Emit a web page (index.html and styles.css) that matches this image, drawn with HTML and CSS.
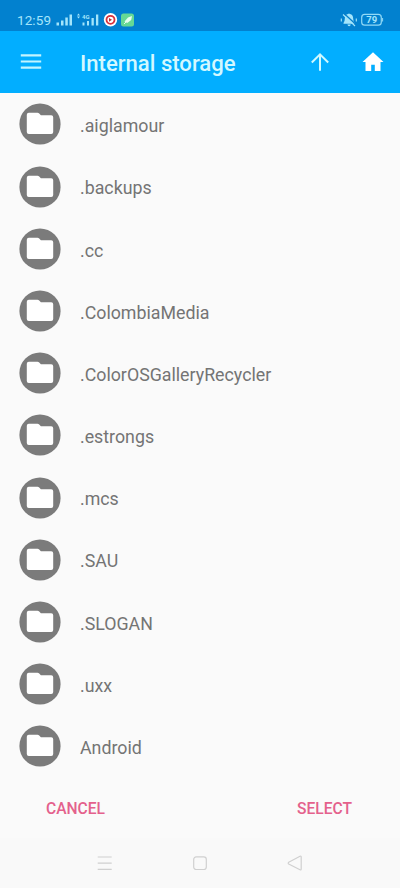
FILE: index.html
```html
<!DOCTYPE html>
<html lang="en">
<head>
<meta charset="utf-8">
<meta name="viewport" content="width=device-width">
<title>Internal storage</title>
<link rel="stylesheet" href="styles.css">
</head>
<body>
<svg class="defs" aria-hidden="true">
  <symbol id="folder" viewBox="0 0 42 42">
    <circle cx="21" cy="21" r="20.6" fill="#7b7b7b"/>
    <path fill="#fff" d="M9.800 9.800h8.700q1 0 1.700.8l1.700 1.700h10.300q2 0 2 2v14.700q0 2-2 2H9.800q-2 0-2-2V11.800q0-2 2-2z"/>
  </symbol>
</svg>
<div class="screen">
  <div class="status">
    <span class="clock">12:59</span>
    <svg class="signals" width="80" height="16" viewBox="56 12 80 16">
      <g fill="#a4e5fb">
        <path d="M56.500 22.500h2.500v3h-2.500zM61 20.500h2.500v5H61zM65.300 17.500h2.500v8h-2.500zM69.500 14.500H72v11h-2.500zM82.500 22.500h2v3h-2zM87 21h2v4.500h-2zM91.500 18h2.300v7.500h-2.300zM96 14.500h2.300v11H96zM77 15.500l1.500-2 1.500 2zM77 16.500h3l-1.500 2z"/>
        <text class="network" x="82" y="18.800">4G</text>
      </g>
      <circle cx="110.500" cy="19.800" r="6.700" fill="#fff"/>
      <circle cx="110.500" cy="19.800" r="4" fill="none" stroke="#d9313c" stroke-width="1.800"/>
      <path d="M109 18l3 1.800-3 2z" fill="#b13239"/>
      <rect x="121" y="13.500" width="13" height="13" rx="2.500" fill="#66d995"/>
      <path d="M124.500 21.500l3.500-4 4-1.500-.8 4-4 3z" fill="#e5fff0"/>
      <path d="M124 24l4-4" stroke="#e5fff0"/>
    </svg>
    <svg class="system" width="44" height="16" viewBox="340 12 44 16">
      <path fill="#a4e5fb" d="M343.500 23q1.300-1.200 1.300-4.200 0-4 3.200-4.800 1-1 2 0 3.200.8 3.200 4.800 0 3 1.500 4.200v.7h-11.200zM347.400 24.500h3.400q-.4 1.700-1.700 1.700t-1.700-1.700z"/>
      <g transform="translate(340 0)">
        <path d="M4 13.500l12 11" stroke="#087fca" stroke-width="1.400"/>
        <path d="M3 14.500l12 11.500M1.300 18.500v3M16.300 18.500v3" stroke="#a4e5fb" stroke-width="1.100"/>
      </g>
      <rect x="361.700" y="14.400" width="19.600" height="10.800" rx="3" fill="none" stroke="#91d9f6" stroke-width="1.200"/>
      <path d="M382.600 18v3.500" stroke="#91d9f6"/>
      <text class="battery" x="366.200" y="23.400">79</text>
    </svg>
  </div>
  <header class="bar">
    <svg width="24" height="24" viewBox="0 0 24 24"><path d="M1.800 5.300h20.400M1.800 11.500h20.400M1.800 17.700h20.400" stroke="#c2f4ff" stroke-width="2.200"/></svg>
    <h1>Internal storage</h1>
    <svg class="up" width="24" height="24" viewBox="0 0 24 24"><path d="M12 20.800V4.300M3.800 12.500L12 4.300l8.200 8.200" fill="none" stroke="#cff8ff" stroke-width="2"/></svg>
    <svg class="home" width="24" height="24" viewBox="0 0 24 24"><path d="M12 2.200L22.500 12h-3v9h-5.700v-6.300h-3.600V21H4.500v-9h-3z" fill="#fff"/></svg>
  </header>
  <ul class="list">
    <li><svg><use href="#folder"/></svg><span>.aiglamour</span></li>
    <li><svg><use href="#folder"/></svg><span>.backups</span></li>
    <li><svg><use href="#folder"/></svg><span>.cc</span></li>
    <li><svg><use href="#folder"/></svg><span>.ColombiaMedia</span></li>
    <li><svg><use href="#folder"/></svg><span>.ColorOSGalleryRecycler</span></li>
    <li><svg><use href="#folder"/></svg><span>.estrongs</span></li>
    <li><svg><use href="#folder"/></svg><span>.mcs</span></li>
    <li><svg><use href="#folder"/></svg><span>.SAU</span></li>
    <li><svg><use href="#folder"/></svg><span>.SLOGAN</span></li>
    <li><svg><use href="#folder"/></svg><span>.uxx</span></li>
    <li><svg><use href="#folder"/></svg><span>Android</span></li>
  </ul>
  <div class="actions"><button>CANCEL</button><button>SELECT</button></div>
  <nav class="nav">
    <svg width="16" height="16" viewBox="0 0 16 16"><path d="M.7 2h14M.7 8.200h14M.7 14.400h14"/></svg>
    <svg width="16" height="16" viewBox="0 0 16 16"><rect x="1.700" y="1.900" width="12.600" height="12.600" rx="2.500"/></svg>
    <svg width="16" height="16" viewBox="0 0 16 16"><path d="M1.700 7.300L13 1.300q1.200-.5 1.200.8v12q0 1.300-1.200.7L1.700 9q-1-.8 0-1.700z"/></svg>
  </nav>
</div>
</body>
</html>
```
FILE: styles.css
```css
* { box-sizing: border-box; }
body { margin: 0; font-family: Roboto, "Liberation Sans", sans-serif; background: #fafafa; }
.defs { display: none; }
.screen { width: 400px; height: 888px; display: flex; flex-direction: column; overflow: hidden; }
.status { height: 31px; flex: none; background: #0281cf; display: flex; justify-content: space-between; padding: 12px 16px 0 17px; }
.clock { width: 39px; font-size: 13.5px; line-height: 17px; letter-spacing: .1px; color: #a4e5fb; }
.signals { margin-right: auto; }
.network { font-size: 6px; font-weight: 700; }
.battery { font-size: 9.5px; font-weight: 700; fill: #a4e5fb; }
.bar { height: 62px; flex: none; background: #02aeff; display: flex; align-items: center; padding: 0 15px 0 19px; }
.bar h1 { margin: 2px auto 0 37px; font-size: 22.1px; line-height: 28px; font-weight: 500; color: #d3f8ff; white-space: nowrap; }
.up { margin-right: 29px; }
.list { list-style: none; margin: 0; padding: .4px 0 0; flex: none; }
.list li { height: 62.18px; display: flex; align-items: center; padding-left: 19px; }
.list svg { width: 42px; height: 42px; flex: none; }
.list span { margin: 3.6px 0 0 19px; font-size: 17.8px; line-height: 24px; color: #747474; }
.actions { height: 63px; flex: none; display: flex; justify-content: space-between; padding: 0 48px 0 46px; margin-top: -2px; }
.actions button { border: 0; padding: 0; background: none; font: 500 15.6px/24px Roboto, sans-serif; height: 24px; margin-top: 21.5px; color: #e4618c; }
.nav { flex: 1; background: #f9f9f9; display: flex; justify-content: center; gap: 79px; padding-top: 16.8px; }
.nav svg { flex: none; fill: none; stroke: #d0d0d0; stroke-width: 1.2; }
```
